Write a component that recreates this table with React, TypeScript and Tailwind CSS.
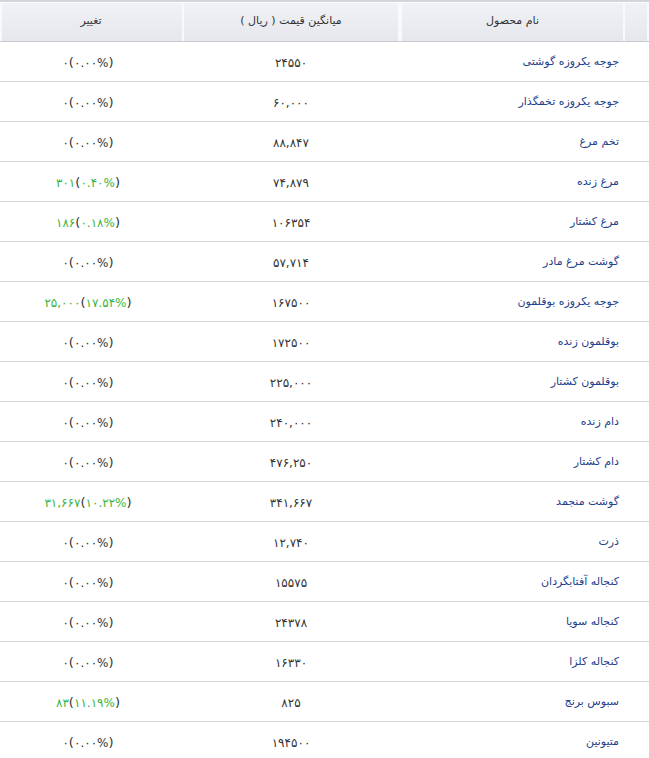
import React from "react";

type Row = { name: string; price: string; ch: string; pct: string; up?: boolean };

const rows: Row[] = [
  { name: "جوجه یکروزه گوشتی", price: "۲۴۵۵۰", ch: "۰", pct: "۰.۰۰%" },
  { name: "جوجه یکروزه تخمگذار", price: "۶۰,۰۰۰", ch: "۰", pct: "۰.۰۰%" },
  { name: "تخم مرغ", price: "۸۸,۸۴۷", ch: "۰", pct: "۰.۰۰%" },
  { name: "مرغ زنده", price: "۷۴,۸۷۹", ch: "۳۰۱", pct: "۰.۴۰%", up: true },
  { name: "مرغ کشتار", price: "۱۰۶۳۵۴", ch: "۱۸۶", pct: "۰.۱۸%", up: true },
  { name: "گوشت مرغ مادر", price: "۵۷,۷۱۴", ch: "۰", pct: "۰.۰۰%" },
  { name: "جوجه یکروزه بوقلمون", price: "۱۶۷۵۰۰", ch: "۲۵,۰۰۰", pct: "۱۷.۵۴%", up: true },
  { name: "بوقلمون زنده", price: "۱۷۲۵۰۰", ch: "۰", pct: "۰.۰۰%" },
  { name: "بوقلمون کشتار", price: "۲۲۵,۰۰۰", ch: "۰", pct: "۰.۰۰%" },
  { name: "دام زنده", price: "۲۴۰,۰۰۰", ch: "۰", pct: "۰.۰۰%" },
  { name: "دام کشتار", price: "۴۷۶,۲۵۰", ch: "۰", pct: "۰.۰۰%" },
  { name: "گوشت منجمد", price: "۳۴۱,۶۶۷", ch: "۳۱,۶۶۷", pct: "۱۰.۲۲%", up: true },
  { name: "ذرت", price: "۱۲,۷۴۰", ch: "۰", pct: "۰.۰۰%" },
  { name: "کنجاله آفتابگردان", price: "۱۵۵۷۵", ch: "۰", pct: "۰.۰۰%" },
  { name: "کنجاله سویا", price: "۲۴۳۷۸", ch: "۰", pct: "۰.۰۰%" },
  { name: "کنجاله کلزا", price: "۱۶۳۳۰", ch: "۰", pct: "۰.۰۰%" },
  { name: "سبوس برنج", price: "۸۲۵", ch: "۸۳", pct: "۱۱.۱۹%", up: true },
  { name: "متیونین", price: "۱۹۴۵۰۰", ch: "۰", pct: "۰.۰۰%" },
];

export default function App() {
  return (
    <div
      dir="rtl"
      className="w-[649px] bg-white text-[11px] text-[#333]"
      style={{ fontFamily: '"DejaVu Sans", Tahoma, sans-serif' }}
    >
      <div className="border-t-2 border-[#d3d5da] bg-gradient-to-b from-[#f1f2f6] to-[#e6e7ec] shadow-[inset_0_1px_0_#fafbfc]">
        <div className="grid h-[40px] grid-cols-[24px_225px_218px_1fr] border-b border-[#c9cbce] items-stretch">
          <div className="shadow-[inset_-2px_0_0_#f8f9fb]" />
          <div className="flex items-center justify-center shadow-[inset_2px_0_0_#f8f9fb,inset_-2px_0_0_#f8f9fb]">
            نام محصول
          </div>
          <div className="flex items-center justify-center shadow-[inset_2px_0_0_#f8f9fb,inset_-2px_0_0_#f8f9fb]">
            میانگین قیمت ( ریال )
          </div>
          <div className="flex items-center justify-center shadow-[inset_2px_0_0_#f8f9fb]">
            تغییر
          </div>
        </div>
      </div>
      {rows.map((r, i) => (
        <div
          key={i}
          className="grid h-10 grid-cols-[24px_225px_218px_1fr] border-b border-[#d6d6d6] items-center pt-[2px]"
        >
          <div />
          <div className="pr-[6px] text-[#22408c]">{r.name}</div>
          <div className="text-center text-[12px] tracking-[2px]" dir="ltr">
            {r.price}
          </div>
          <div className="text-center text-[12px] tracking-[2px] pr-[6px]" dir="ltr">
            <span className={r.up ? "text-[#3cb43c]" : ""}>{r.ch}</span>
            <span className="text-[13px]">(</span>
            <span className={r.up ? "text-[#3cb43c]" : ""}>{r.pct}</span>
            <span className="text-[13px]">)</span>
          </div>
        </div>
      ))}
    </div>
  );
}
